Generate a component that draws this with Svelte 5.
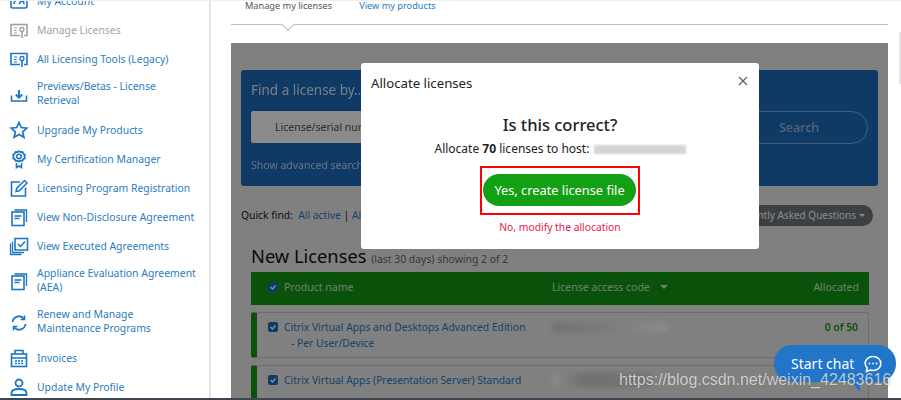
<script>
  const nav = [
    { icon: 'gauge', label: 'My Account' },
    { icon: 'tool', label: 'Manage Licenses', muted: true },
    { icon: 'tool', label: 'All Licensing Tools (Legacy)' },
    { icon: 'download', label: 'Previews/Betas - License Retrieval', wrap: 'Previews/Betas - License', rest: 'Retrieval' },
    { icon: 'star', label: 'Upgrade My Products' },
    { icon: 'award', label: 'My Certification Manager' },
    { icon: 'edit', label: 'Licensing Program Registration' },
    { icon: 'doc', label: 'View Non-Disclosure Agreement' },
    { icon: 'check', label: 'View Executed Agreements' },
    { icon: 'doc', label: 'Appliance Evaluation Agreement (AEA)', wrap: 'Appliance Evaluation Agreement', rest: '(AEA)' },
    { icon: 'renew', label: 'Renew and Manage Maintenance Programs', wrap: 'Renew and Manage', rest: 'Maintenance Programs' },
    { icon: 'invoice', label: 'Invoices' },
    { icon: 'user', label: 'Update My Profile' }
  ];
</script>

{#snippet tick()}
  <svg class="tick" viewBox="0 0 10 10" fill="none" stroke="#fff" stroke-width="1.400"><path d="M2.500 5l2 2 3-3.500" /></svg>
{/snippet}

<div class="page">
  <aside class="sidebar">
    <ul class="nav">
      {#each nav as item}
        <li class="nav-item" class:muted={item.muted} class:double={item.wrap}>
          <svg class="nav-icon" viewBox="0 0 20 20" fill="none" stroke="currentColor" stroke-width="1.6">
            {#if item.icon === 'gauge'}
              <rect x="2" y="3" width="16" height="14" rx="2" /><path d="M5 13a5 5 0 0 1 10 0M10 13l3-4" />
            {:else if item.icon === 'tool'}
              <path d="M11 15.500H2V4.500h16v11h-3" /><path d="M5 8h3M5 10.500h2.500M5 13h3" stroke-width="1.200" /><circle cx="13" cy="9.500" r="2" stroke-width="1.300" /><path d="M13 11.500V18" />
            {:else if item.icon === 'download'}
              <path d="M2.500 10.500v5.500h15v-5.500" /><path d="M10 5v7.500M6.800 9.500l3.200 3.200 3.200-3.200" stroke-width="1.900" />
            {:else if item.icon === 'star'}
              <path d="M10 2.500l2.300 5 5.500.6-4.100 3.700 1.200 5.400-4.900-2.800-4.900 2.800 1.200-5.400-4.100-3.700 5.500-.6z" stroke-width="1.700" />
            {:else if item.icon === 'award'}
              <path d="M10 1.800l2 1.100 2.300-.2 1 2.100 2 1.200-.5 2.300.5 2.200-2 1.200-1 2.100-2.300-.2-2 1.100-2-1.100-2.300.2-1-2.100-2-1.200.5-2.200-.5-2.300 2-1.200 1-2.100 2.300.2z" transform="translate(2 .8) scale(.8)" stroke-width="2.200" /><circle cx="10" cy="7.500" r="2.200" /><path d="M7.500 14v4.500l2.500-1.500 2.500 1.500V14" />
            {:else if item.icon === 'edit'}
              <path d="M11 4H2.500v14h14V9.500" /><path d="M7 13.500l.8-3.300L15.500 2.500l2.500 2.500-7.700 7.700z" stroke-width="1.500" />
            {:else if item.icon === 'doc'}
              <path d="M5.500 3h12v12" stroke-width="1.300" /><rect x="3" y="5" width="12" height="13.500" /><path d="M5.500 9h7M5.500 11.500h5" stroke-width="1.400" />
            {:else if item.icon === 'check'}
              <path d="M6 2.500h12.500V14H6z" /><path d="M3.500 5.500v11h11.500M1.500 7.500v11h11" stroke-width="1.300" /><path d="M9 8l2.500 2.500L16 5.500" stroke-width="1.500" />
            {:else if item.icon === 'renew'}
              <path d="M3.500 9a6.500 6.500 0 0 1 11.500-3.300" stroke-width="1.800" /><path d="M16.500 11a6.500 6.500 0 0 1-11.500 3.300" stroke-width="1.800" /><path d="M15.500 2.500v4h-4M4.500 17.500v-4h4" stroke-width="1.500" />
            {:else if item.icon === 'invoice'}
              <rect x="2.500" y="6" width="15" height="12.500" /><path d="M6 6V2.500h8V6M2.500 10h15" /><path d="M6 13h8M6 15.500h8" stroke-dasharray="2 1" stroke-width="1.500" />
            {:else}
              <circle cx="10" cy="6" r="3.500" stroke-width="1.800" /><path d="M2.500 18v-2c0-2.500 3-4 7.500-4s7.500 1.500 7.500 4v2z" stroke-width="1.800" />
            {/if}
          </svg>
          <span class="nav-label">
            {#if item.wrap}{item.wrap}<br />{item.rest}{:else}{item.label}{/if}
          </span>
        </li>
      {/each}
    </ul>
  </aside>

  <main class="main">
    <nav class="tabs">
      <span class="tab active">Manage my licenses</span>
      <span class="tab">View my products</span>
      <span class="notch"></span>
    </nav>

    <section class="panel">
      <div class="search-box">
        <h3 class="search-title">Find a license by...</h3>
        <div class="search-row">
          <div class="search-input">License/serial number</div>
          <div class="search-btn">Search</div>
        </div>
        <div class="adv">Show advanced search</div>
      </div>

      <div class="quick">
        <span>Quick find:&nbsp; <a href="#a">All active</a> | <a href="#b">All</a></span>
        <span class="faq">Frequently Asked Questions<i class="caret"></i></span>
      </div>

      <div class="list">
        <h2 class="list-title">New Licenses <small>(last 30 days) showing 2 of 2</small></h2>
        <div class="list-head">
          <span class="box">{@render tick()}</span>
          <span class="col-name">Product name</span>
          <span class="col-code">License access code<i class="caret big"></i></span>
          <span class="col-alloc">Allocated</span>
        </div>
        <div class="row">
          <span class="box">{@render tick()}</span>
          <span class="col-name link">Citrix Virtual Apps and Desktops Advanced Edition<br /><span class="sub">- Per User/Device</span></span>
          <span class="col-code"><span class="blur one"></span></span>
          <span class="col-alloc count">0 of 50</span>
        </div>
        <div class="row">
          <span class="box">{@render tick()}</span>
          <span class="col-name link">Citrix Virtual Apps (Presentation Server) Standard</span>
          <span class="col-code"><span class="blur two"></span></span>
        </div>
      </div>
      <div class="backdrop"></div>
    </section>
  </main>

  <div class="modal">
    <header class="modal-head">
      <span>Allocate licenses</span>
      <svg class="close" viewBox="0 0 10 10" stroke="#666" stroke-width="1.300"><path d="M1 1l8 8M9 1l-8 8" /></svg>
    </header>
    <div class="modal-body">
      <h4>Is this correct?</h4>
      <p>Allocate <b>70</b> licenses to host: <span class="host"></span></p>
      <div class="highlight"><button class="yes">Yes, create license file</button></div>
      <a class="no" href="#n">No, modify the allocation</a>
    </div>
  </div>

  <div class="chat">
    <span>Start chat</span>
    <svg class="chat-icon" viewBox="0 0 20 20" fill="none" stroke="#fff" stroke-width="1.600">
      <path d="M10 2.500c4.500 0 7.800 3 7.800 7s-3.300 7-7.800 7c-1 0-2-.2-2.800-.5L3.500 17.500l.7-3.600C2.900 12.700 2.200 11.200 2.200 9.500c0-4 3.300-7 7.800-7z" />
      <circle cx="6.500" cy="9.500" r=".9" fill="#fff" stroke="none" /><circle cx="10" cy="9.500" r=".9" fill="#fff" stroke="none" /><circle cx="13.500" cy="9.500" r=".9" fill="#fff" stroke="none" />
    </svg>
    <i class="tail"></i>
  </div>
  <div class="watermark">https://blog.csdn.net/weixin_42483616</div>
  <div class="scrollbar"></div>
</div>

<style>
  :global(body) { margin: 0; background: #fff; }
  .page {
    position: relative;
    width: 901px;
    height: 400px;
    box-sizing: border-box;
    overflow: hidden;
    display: flex;
    font-family: "Noto Sans", sans-serif;
    border-top: 1px solid #f0f0f0;
    border-bottom: 2px solid #3d4650;
  }
  .sidebar {
    width: 209px;
    flex: none;
    border-right: 2px solid #e4e4e4;
  }
  .nav { list-style: none; margin: -14.500px 0 0; padding: 0; }
  .nav-item {
    display: flex;
    align-items: center;
    padding: 7.500px 0 7.500px 9px;
    color: #2b7cc0;
    font-size: 10.400px;
    line-height: 14px;
  }
  .nav-item.double { padding-top: 5.500px; padding-bottom: 8px; }
  .nav-item.muted { color: #a3a3a3; }
  .nav-icon { width: 20px; height: 20px; flex: none; margin: -3px 8px -3px 0; color: #1b76c4; }
  .nav-item.double .nav-icon { margin-top: 0; }
  .nav-item.muted .nav-icon { color: #a0a0a0; }
  .main { flex: 1; padding: 0 13px 0 20px; min-width: 0; }
  .tabs {
    position: relative;
    display: flex;
    height: 23px;
    gap: 27px;
    padding-left: 14px;
    border-bottom: 1px solid #bfbfbf;
    font-size: 9.200px;
    line-height: 9px;
    color: #2b7cc0;
  }
  .tab.active { color: #555; }
  .notch {
    position: absolute;
    left: 52px;
    bottom: -5px;
    width: 9px;
    height: 9px;
    background: #fff;
    border-right: 1px solid #bfbfbf;
    border-bottom: 1px solid #bfbfbf;
    transform: rotate(45deg);
  }
  .panel {
    position: relative;
    margin-top: 18px;
    height: 400px;
    padding: 27px 10px 0;
    background: #ededed;
  }
  .backdrop { position: absolute; inset: 0; background: rgba(0, 0, 0, .46); }
  .search-box {
    height: 116px;
    box-sizing: border-box;
    padding: 11px 10px 0;
    background: #1c6bbd;
    border-radius: 3px;
    color: #fff;
  }
  .search-title { margin: 0; font-size: 13.500px; line-height: 19px; font-weight: 400; opacity: .85; }
  .search-row { display: flex; justify-content: space-between; margin-top: 11px; }
  .search-input {
    width: 300px;
    height: 32px;
    box-sizing: border-box;
    padding-left: 24px;
    background: #fff;
    border-radius: 2px;
    color: #555;
    font-size: 10.500px;
    line-height: 32px;
  }
  .search-btn {
    width: 138px;
    height: 33px;
    box-sizing: border-box;
    border: 1px solid rgba(255, 255, 255, .45);
    border-radius: 17px;
    color: rgba(255, 255, 255, .55);
    text-align: center;
    font-size: 12.500px;
    font-weight: 500;
    line-height: 31px;
  }
  .adv { margin-top: 14px; font-size: 10.500px; line-height: 14px; opacity: .7; }
  .quick {
    display: flex;
    justify-content: space-between;
    align-items: center;
    margin: 18px 5px 0 0;
    height: 22px;
    font-size: 10.300px;
    color: #222;
  }
  .quick a { color: #2b7cc0; text-decoration: none; }
  .faq {
    display: flex;
    align-items: center;
    height: 21px;
    padding: 0 8px 0 12px;
    border-radius: 11px;
    background: #6f767c;
    color: #fff;
    font-size: 10px;
  }
  .caret { display: inline-block; margin-left: 3px; border: 3px solid transparent; border-top: 3px solid currentColor; border-bottom: 0; }
  .caret.big { margin-left: 10px; border-width: 4px 4px 0; vertical-align: 2px; }
  .list { margin-left: 10px; }
  .list-title { margin: 18px 0 0; font-size: 18.300px; line-height: 24px; font-weight: 400; color: #111; }
  .list-title small { font-size: 10.400px; color: #666; }
  .list-head, .row { display: flex; box-sizing: border-box; width: 618px; }
  .list-head {
    align-items: center;
    height: 33px;
    margin-top: 1px;
    padding-bottom: 4px;
    background: #139813;
    color: rgba(255, 255, 255, .8);
    font-size: 10.500px;
  }
  .row {
    margin-top: 7px;
    padding-top: 6px;
    height: 46px;
    border: 1px solid #ccc;
    border-left: 6px solid #139813;
    border-radius: 3px;
    font-size: 10.300px;
    line-height: 16px;
  }
  .box {
    display: block;
    width: 10px;
    height: 10px;
    margin: 0 6px 0 17px;
    flex: none;
    background: #1c6bbd;
    border-radius: 2px;
  }
  .tick { display: block; width: 10px; height: 10px; }
  .row .box { margin: 3px 6px 0 11px; }
  .col-name { width: 268px; flex: none; }
  .link { color: #2b7cc0; }
  .sub { margin-left: 7px; }
  .col-code { width: 190px; flex: none; }
  .col-alloc { flex: 1; text-align: right; padding-right: 10px; }
  .count { color: #139813; font-weight: 600; }
  .blur { display: block; background: linear-gradient(90deg, #d4d4d4, #e4e4e4 45%, #fff); filter: blur(2px); }
  .blur.one { width: 115px; height: 11px; margin-top: 3px; }
  .blur.two { width: 100px; height: 14px; margin-top: 1px; background: linear-gradient(90deg, #fff, #cfcfcf 30%, #d8d8d8); }
  .modal {
    position: absolute;
    left: 361px;
    top: 62px;
    width: 398px;
    height: 186px;
    background: #fff;
    border-radius: 3px;
  }
  .modal-head { display: flex; align-items: center; justify-content: space-between; padding: 10px 11px 0 10px; height: 19px; font-size: 13.200px; color: #222; }
  .close { width: 10px; height: 10px; margin-top: -4px; }
  .modal-body { display: flex; flex-direction: column; align-items: center; padding-top: 21px; color: #222; }
  .modal-body h4 { margin: 0; font-size: 16.500px; line-height: 24px; font-weight: 500; }
  .modal-body p { margin: 4px 0 0; font-size: 12px; line-height: 16px; }
  .host { display: inline-block; width: 92px; height: 9px; background: #d4d4d4; vertical-align: -1px; margin-left: 1px; filter: blur(.8px); }
  .highlight { margin-top: 9px; padding: 6px 2px 7px 1px; border: 2px solid #f00; }
  .yes {
    display: block;
    width: 153px;
    height: 32px;
    border: 0;
    border-radius: 16px;
    background: #14a014;
    color: #fff;
    font: 400 12.800px/32px "Noto Sans", sans-serif;
    padding: 0;
  }
  .no { margin-top: 5px; font-size: 10.300px; line-height: 14px; color: #e0204c; text-decoration: none; }
  .chat {
    position: absolute;
    left: 774px;
    top: 344px;
    display: flex;
    align-items: center;
    box-sizing: border-box;
    width: 122px;
    height: 37px;
    padding-left: 17px;
    border-radius: 18px;
    background: #2176c9;
    color: #fff;
    font-size: 14px;
  }
  .chat-icon { width: 20px; height: 20px; margin-left: 9px; }
  .tail {
    position: absolute;
    left: 76px;
    top: 35px;
    border-top: 12px solid #2176c9;
    border-left: 10px solid transparent;
  }
  .watermark {
    position: absolute;
    left: 619px;
    top: 370px;
    font-family: "Liberation Sans", sans-serif;
    font-size: 16px;
    line-height: 18px;
    color: rgba(255, 255, 255, .72);
    text-shadow: 0 0 1px rgba(0, 0, 0, .35);
    white-space: nowrap;
  }
  .scrollbar {
    position: absolute;
    right: 0;
    top: 31px;
    width: 2px;
    height: 52px;
    background: #e4e4e4;
  }
</style>
